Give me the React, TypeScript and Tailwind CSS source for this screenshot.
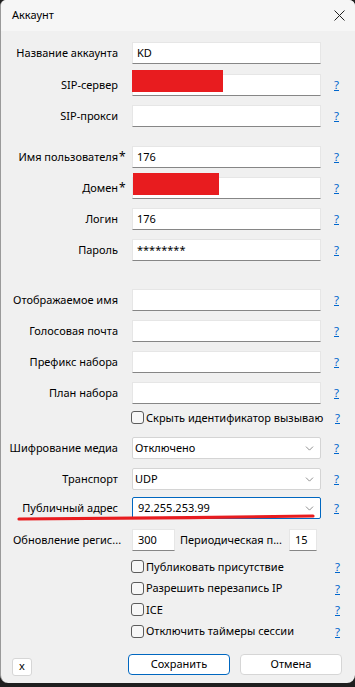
import { ChevronDown } from "lucide-react";

const font = { fontFamily: '"Noto Sans", "Open Sans", sans-serif' };

function Help() {
  return <span className="ml-[13px] text-[11.5px] text-[#0066cc] underline leading-none">?</span>;
}

function Field({ label, value, star, mt, help = true }: { label: string; value?: string; star?: boolean; mt: string; help?: boolean }) {
  return (
    <div className={`flex items-center h-[22px] ${mt}`}>
      <div className="w-[117px] text-right text-[11px] text-black whitespace-nowrap">{label}</div>
      <div className="w-[14px] text-[12px] text-black pl-[1px] leading-none">{star ? "*" : ""}</div>
      <div className="w-[189px] h-[22px] bg-white border border-[#e6e6e6] border-b-[#868686] px-[4px] flex items-center text-[11px] text-black">
        {value}
      </div>
      {help && <Help />}
    </div>
  );
}

function Select({ label, value, mt, active }: { label: string; value: string; mt: string; active?: boolean }) {
  return (
    <div className={`flex items-center h-[22px] ${mt}`}>
      <div className="w-[117px] text-right text-[11px] text-black whitespace-nowrap">{label}</div>
      <div className="w-[14px]" />
      <div
        className={`w-[189px] h-[22px] bg-white border rounded-[2px] pl-[2px] pr-[4px] flex items-center justify-between text-[11px] text-black ${
          active ? "border-[#0067c0]" : "border-[#d4d4d4]"
        }`}
      >
        <span className={active ? "ml-[3px]" : ""}>{value}</span>
        <ChevronDown size={13} strokeWidth={1.2} className="text-[#555]" />
      </div>
      <Help />
    </div>
  );
}

function Check({ label, mt }: { label: string; mt: string }) {
  return (
    <div className={`flex items-center h-[21.5px] ${mt}`}>
      <div className="w-[130px]" />
      <div className="flex items-center w-[191px]">
        <div className="w-[13px] h-[13px] shrink-0 rounded-[3px] border border-[#5c5c5c] bg-[#f7f7f7]" />
        <span className="ml-[2px] text-[11px] text-black whitespace-nowrap">{label}</span>
      </div>
      <span className="ml-[13px] text-[11.5px] text-[#0066cc] underline leading-none">?</span>
    </div>
  );
}

export default function App() {
  return (
    <div className="w-[355px] h-[687px] bg-[#1f1f1f] relative" style={font}>
      <div className="w-[355px] h-[683px] bg-[#f0f0f0] rounded-b-[8px] rounded-t-[6px] border-l border-[#9a9a9a] flex flex-col overflow-hidden">
        <div className="h-[31px] shrink-0 bg-[#f6f6f6] flex items-center justify-between pl-[11px] pr-[9px]">
          <span className="text-[11px] text-black">Аккаунт</span>
          <svg width="11" height="11" viewBox="0 0 11 11" className="mr-[1px]">
            <path d="M0.5 0.5 L10.5 10.5 M10.5 0.5 L0.5 10.5" stroke="#222" strokeWidth="1" />
          </svg>
        </div>

        <Field label="Название аккаунта" value="KD" mt="mt-[11px]" help={false} />
        <Field label="SIP-сервер" mt="mt-[10px]" />
        <Field label="SIP-прокси" mt="mt-[9px]" />

        <Field label="Имя пользователя" value="176" star mt="mt-[19px]" />
        <Field label="Домен" star mt="mt-[9px]" />
        <Field label="Логин" value="176" mt="mt-[9px]" />
        <Field label="Пароль" value="********" mt="mt-[9px]" />

        <Field label="Отображаемое имя" mt="mt-[28px]" />
        <Field label="Голосовая почта" mt="mt-[9px]" />
        <Field label="Префикс набора" mt="mt-[9px]" />
        <Field label="План набора" mt="mt-[9px]" />

        <Check label="Скрыть идентификатор вызываю" mt="mt-[3px]" />

        <Select label="Шифрование медиа" value="Отключено" mt="mt-[8.5px]" />
        <Select label="Транспорт" value="UDP" mt="mt-[9px]" />
        <Select label="Публичный адрес" value="92.255.253.99" mt="mt-[7px]" active />

        <div className="flex items-center h-[22px] mt-[10px]">
          <div className="w-[117px] pl-[12px] text-[11px] text-black whitespace-nowrap">Обновление регис...</div>
          <div className="w-[14px]" />
          <div className="w-[43px] h-[22px] bg-white border border-[#e6e6e6] border-b-[#868686] px-[5px] flex items-center text-[11px]">300</div>
          <div className="ml-[5px] w-[109px] text-[11px] text-black whitespace-nowrap">Периодическая п...</div>
          <div className="w-[28px] h-[22px] bg-white border border-[#e6e6e6] border-b-[#868686] px-[5px] flex items-center text-[11px]">15</div>
        </div>

        <Check label="Публиковать присутствие" mt="mt-[5px]" />
        <Check label="Разрешить перезапись IP" mt="mt-0" />
        <Check label="ICE" mt="mt-0" />
        <Check label="Отключить таймеры сессии" mt="mt-0" />

        <div className="flex items-center mt-[12px] h-[21px]">
          <div className="ml-[11px] w-[20px] h-[18px] mt-[4px] bg-white border border-[#d6d6d6] rounded-[3px] flex items-center justify-center text-[11px] leading-none pb-[2px]">x</div>
          <div className="ml-[96px] w-[102px] h-[21px] bg-white border border-[#0067c0] rounded-[4px] flex items-center justify-center text-[11px]">Сохранить</div>
          <div className="ml-[10px] w-[102px] h-[21px] bg-white border border-[#d6d6d6] rounded-[4px] flex items-center justify-center text-[11px]">Отмена</div>
        </div>
      </div>

      {/* redactions */}
      <div className="absolute left-[132px] top-[70px] w-[91px] h-[22px] bg-[#e81c1f]" />
      <div className="absolute left-[133px] top-[173px] w-[86px] h-[22px] bg-[#e81c1f]" />
      {/* underline annotation */}
      <svg className="absolute left-0 top-[510px]" width="355" height="14" viewBox="0 0 355 14">
        <path d="M19 9 C 100 8.5, 220 7.5, 313 6" stroke="#e81c1f" strokeWidth="3.2" strokeLinecap="round" fill="none" />
      </svg>
    </div>
  );
}
